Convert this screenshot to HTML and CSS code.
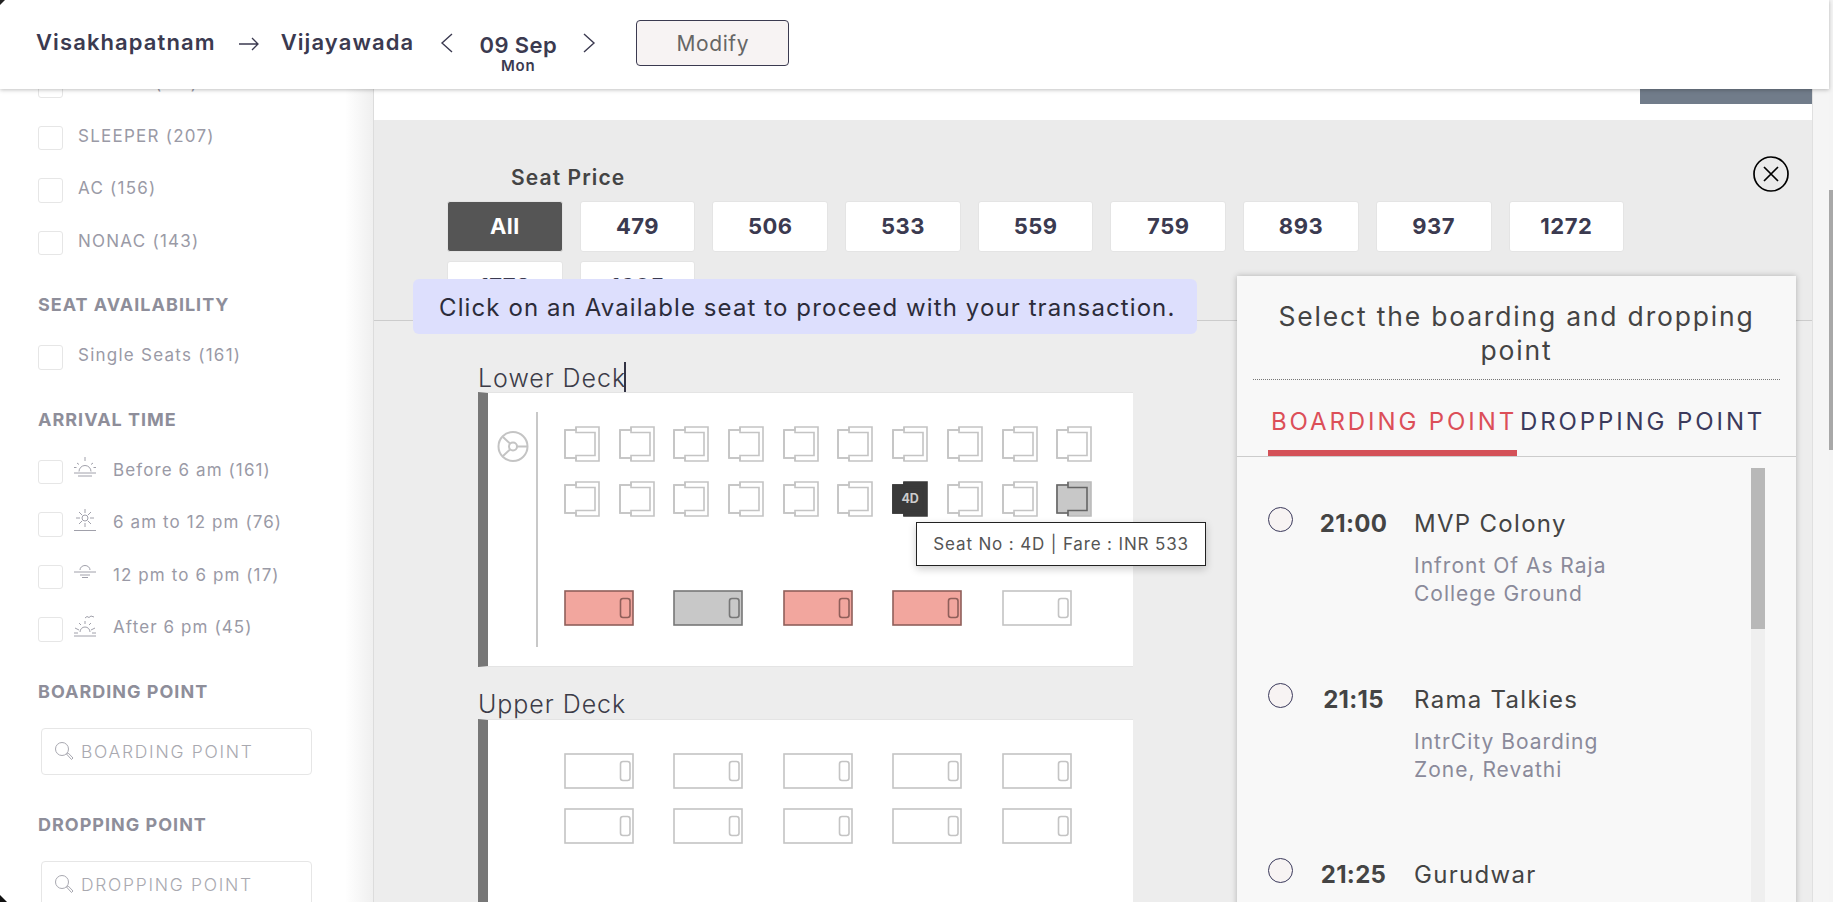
FILE: index.html
```html
<!DOCTYPE html>
<html>
<head>
<meta charset="utf-8"/>
<title>Select seats</title>
<link rel="stylesheet" href="styles.css">
</head>
<body>
<svg class="defs" width="0" height="0">
  <symbol id="seat" viewBox="0 0 36 36">
    <path d="M1 4H12V1H35V35H12V32H1Z"/>
    <path class="seat-in" d="M12 1V6.500H31V29.500H12V35M12 4H1V32H12"/>
  </symbol>
  <symbol id="berth" viewBox="0 0 70 36">
    <rect x="1" y="1" width="68" height="34"/>
    <rect class="seat-in" x="56.500" y="8.500" width="9.500" height="19" rx="2.500"/>
  </symbol>
  <symbol id="lens" viewBox="0 0 20 20">
    <circle cx="8" cy="8" r="6.500"/>
    <path d="M12.500 13L14 11.800L19 17L17.500 18.500Z"/>
  </symbol>
</svg>

<div class="wrap">
  <div class="page">
    <header class="topbar">
      <span class="city">Visakhapatnam</span>
      <svg class="arrow" width="20" height="14" viewBox="0 0 20 14"><path d="M0 7H19M13 1L19 7L13 13"/></svg>
      <span class="city">Vijayawada</span>
      <svg class="chev chev-l" width="13" height="20" viewBox="0 0 13 20"><path d="M12 1L2 10L12 19"/></svg>
      <div class="date"><b>09 Sep</b><small>Mon</small></div>
      <svg class="chev chev-r" width="13" height="20" viewBox="0 0 13 20"><path d="M1 1L11 10L1 19"/></svg>
      <button class="modify">Modify</button>
    </header>

    <div class="content">
      <aside class="filters">
        <div class="filter-list">
          <label class="check"><i></i><span>SEATER (161)</span></label>
          <label class="check"><i></i><span>SLEEPER (207)</span></label>
          <label class="check"><i></i><span>AC (156)</span></label>
          <label class="check"><i></i><span>NONAC (143)</span></label>

          <h4 class="filter-head">SEAT AVAILABILITY</h4>
          <label class="check"><i></i><span>Single Seats (161)</span></label>

          <h4 class="filter-head">ARRIVAL TIME</h4>
          <label class="check timed"><i></i>
            <svg width="22" height="23" viewBox="0 0 22 23"><path d="M11 0V4M5 14.500A6 6 0 0 1 17 14.500M0 16H22M4 19H18M3 6L5 7.500M19 6L17 7.500M0 10.500H2.500M19.500 10.500H22"/></svg>
            <span>Before 6 am (161)</span></label>
          <label class="check timed"><i></i>
            <svg width="22" height="23" viewBox="0 0 22 23"><circle cx="11" cy="9" r="3"/><path d="M11 0V4M11 14V18M2 9H6M16 9H20M5 3L8 6M17 3L14 6M5 15L8 12M17 15L14 12M0 21.500H22"/></svg>
            <span>6 am to 12 pm (76)</span></label>
          <label class="check timed"><i></i>
            <svg width="22" height="23" viewBox="0 0 22 23"><path d="M6 8A5 4.500 0 0 1 16 8M0 10H22M6 13H16M8 15.500H14"/></svg>
            <span>12 pm to 6 pm (17)</span></label>
          <label class="check timed"><i></i>
            <svg width="22" height="23" viewBox="0 0 22 23"><path d="M11 4L13 2.500L15 3.500L17 2L20 3M11 7V10M5 9L7 11M17 9L15 11M1 14L5 16M21 14L17 16M6 18A5 5 0 0 1 16 18M0 19H4M18 19H22M0 22H22"/></svg>
            <span>After 6 pm (45)</span></label>

          <h4 class="filter-head">BOARDING POINT</h4>
          <div class="search"><svg width="20" height="20"><use href="#lens"/></svg><span>BOARDING POINT</span></div>

          <h4 class="filter-head">DROPPING POINT</h4>
          <div class="search"><svg width="20" height="20"><use href="#lens"/></svg><span>DROPPING POINT</span></div>
        </div>
      </aside>

      <main class="bus">
        <div class="bus-top"><div class="bus-btn"></div></div>

        <section class="prices">
          <h3>Seat Price</h3>
          <div class="chips">
            <div class="chip active">All</div>
            <div class="chip">479</div>
            <div class="chip">506</div>
            <div class="chip">533</div>
            <div class="chip">559</div>
            <div class="chip">759</div>
            <div class="chip">893</div>
            <div class="chip">937</div>
            <div class="chip">1272</div>
            <div class="chip">1772</div>
            <div class="chip">1605</div>
          </div>
          <svg class="close" width="36" height="36" viewBox="0 0 36 36"><circle cx="18" cy="18" r="17"/><path d="M11 11L25 25M25 11L11 25"/></svg>
          <div class="notice">Click on an Available seat to proceed with your transaction.</div>
        </section>

        <section class="decks">
          <div class="deck-name">Lower Deck<em class="caret"></em></div>
          <div class="deck deck-lower">
            <svg class="wheel" width="32" height="33" viewBox="0 0 32 33"><circle cx="16" cy="16.500" r="14.500"/><circle cx="16" cy="16.500" r="4"/><path d="M6 7L13 13.500M6 26L13 19.500M20 16.500H31"/></svg>
            <div class="seats">
              <div class="seat-grid">
                <svg class="seat"><use href="#seat"/></svg>
                <svg class="seat"><use href="#seat"/></svg>
                <svg class="seat"><use href="#seat"/></svg>
                <svg class="seat"><use href="#seat"/></svg>
                <svg class="seat"><use href="#seat"/></svg>
                <svg class="seat"><use href="#seat"/></svg>
                <svg class="seat"><use href="#seat"/></svg>
                <svg class="seat"><use href="#seat"/></svg>
                <svg class="seat"><use href="#seat"/></svg>
                <svg class="seat"><use href="#seat"/></svg>
                <svg class="seat"><use href="#seat"/></svg>
                <svg class="seat"><use href="#seat"/></svg>
                <svg class="seat"><use href="#seat"/></svg>
                <svg class="seat"><use href="#seat"/></svg>
                <svg class="seat"><use href="#seat"/></svg>
                <svg class="seat"><use href="#seat"/></svg>
                <div class="seat-hover"><svg class="seat dark"><use href="#seat"/></svg><span>4D</span>
                  <div class="seat-tip">Seat No : 4D | Fare : INR 533</div>
                </div>
                <svg class="seat"><use href="#seat"/></svg>
                <svg class="seat"><use href="#seat"/></svg>
                <svg class="seat taken"><use href="#seat"/></svg>
              </div>
              <div class="berth-grid berth-single">
                <svg class="berth ladies"><use href="#berth"/></svg>
                <svg class="berth taken"><use href="#berth"/></svg>
                <svg class="berth ladies"><use href="#berth"/></svg>
                <svg class="berth ladies"><use href="#berth"/></svg>
                <svg class="berth"><use href="#berth"/></svg>
              </div>
            </div>
          </div>

          <div class="deck-name upper-name">Upper Deck</div>
          <div class="deck deck-upper">
            <div class="berth-grid">
              <svg class="berth"><use href="#berth"/></svg>
              <svg class="berth"><use href="#berth"/></svg>
              <svg class="berth"><use href="#berth"/></svg>
              <svg class="berth"><use href="#berth"/></svg>
              <svg class="berth"><use href="#berth"/></svg>
              <svg class="berth"><use href="#berth"/></svg>
              <svg class="berth"><use href="#berth"/></svg>
              <svg class="berth"><use href="#berth"/></svg>
              <svg class="berth"><use href="#berth"/></svg>
              <svg class="berth"><use href="#berth"/></svg>
            </div>
          </div>
        </section>

        <aside class="points">
          <h3>Select the boarding and dropping point</h3>
          <div class="tabs">
            <div class="tab on">BOARDING POINT</div>
            <div class="tab">DROPPING POINT</div>
          </div>
          <div class="point-list">
            <div class="point">
              <i class="radio"></i><b>21:00</b>
              <div><p class="point-name">MVP Colony</p><p class="point-addr">Infront Of As Raja<br>College Ground</p></div>
            </div>
            <div class="point">
              <i class="radio"></i><b>21:15</b>
              <div><p class="point-name">Rama Talkies</p><p class="point-addr">IntrCity Boarding<br>Zone, Revathi</p></div>
            </div>
            <div class="point">
              <i class="radio"></i><b>21:25</b>
              <div><p class="point-name">Gurudwar</p></div>
            </div>
            <div class="list-bar"><div class="list-thumb"></div></div>
          </div>
        </aside>
      </main>

      <div class="gutter"></div>
    </div>
  </div>
  <div class="page-bar"><div class="page-thumb"></div></div>
</div>
</body>
</html>
```

FILE: styles.css
```css
* {
  box-sizing: border-box;
}

html, body {
  margin: 0;
  height: 902px;
  overflow: hidden;
}

body {
  font-family: Inter, "Open Sans", sans-serif;
  background: white;
  color: #444;
}

.defs {
  position: absolute;
}

.wrap {
  position: relative;
  display: flex;
  height: 902px;
}

/* the dark window corners on the left */
.wrap::before,
.wrap::after {
  content: "";
  position: absolute;
  left: 0;
  z-index: 9;
}

.wrap::before {
  top: 0;
  width: 5px;
  height: 5px;
  background: linear-gradient(135deg, #222 45%, transparent 55%);
}

.wrap::after {
  bottom: 0;
  width: 7px;
  height: 7px;
  background: linear-gradient(45deg, #111 45%, transparent 55%);
}

.page {
  flex: 1;
  min-width: 0;
  display: flex;
  flex-direction: column;
}

.page-bar {
  width: 4px;
  background: #f4f4f4;
  padding-top: 190px;
}

.page-thumb {
  height: 260px;
  background: #a8a8a8;
}

/* top bar */
.topbar {
  position: relative;
  z-index: 5;
  flex: none;
  height: 89px;
  background: white;
  box-shadow: 0 1px 4px rgba(0, 0, 0, .25);
  display: flex;
  align-items: center;
  padding-left: 36px;
  color: #3b3a50;
}

.city {
  font-size: 22px;
  font-weight: 600;
  letter-spacing: 1.100px;
  margin-top: -5px;
}

.arrow {
  margin: -1px 22px 0 23px;
  fill: none;
  stroke: #3b3a50;
  stroke-width: 1.300;
}

.chev {
  fill: none;
  stroke: #3b3a50;
  stroke-width: 1.400;
  margin-top: -4px;
}

.chev-l {
  margin-left: 26px;
}

.date {
  width: 130px;
  text-align: center;
  padding-top: 16px;
}

.date b {
  display: block;
  font-size: 22px;
  font-weight: 600;
  line-height: 26px;
  letter-spacing: .4px;
}

.date small {
  display: block;
  font-size: 15px;
  font-weight: 600;
  line-height: 16px;
  letter-spacing: .8px;
}

.modify {
  width: 153px;
  height: 46px;
  margin: -3px 0 0 40px;
  background: #f7f3f3;
  border: 1px solid #3b3a50;
  border-radius: 4px;
  font-family: inherit;
  font-size: 21px;
  color: #666;
  letter-spacing: .6px;
}

/* layout under the bar */
.content {
  flex: 1;
  min-height: 0;
  display: flex;
}

.filters {
  flex: none;
  width: 374px;
  overflow: hidden;
  background: linear-gradient(to right, white 345px, #f0f0f0 372px);
  border-right: 1px solid #dcdcdc;
}

.filter-list {
  margin-top: -16px;
  padding-left: 38px;
}

.check {
  display: flex;
  align-items: flex-start;
  height: 24.500px;
  margin-bottom: 28px;
  font-size: 17px;
  line-height: 20px;
  color: #9a9aa6;
  letter-spacing: 1.250px;
}

.check i {
  flex: none;
  width: 25px;
  height: 24.500px;
  background: white;
  border: 1px solid #e6e6e6;
  border-radius: 3px;
  margin-right: 15px;
}

.check.timed {
  letter-spacing: 1.100px;
}

.check.timed i {
  margin-right: 11px;
}

.check svg {
  flex: none;
  margin: -3px 17px 0 0;
  fill: none;
  stroke: #a0a0aa;
  stroke-width: 1;
}

.filter-head {
  margin: 40px 0 30px;
  font-size: 18px;
  line-height: 20px;
  font-weight: 700;
  color: #8e8e9a;
  letter-spacing: 1px;
}

.search {
  display: flex;
  align-items: center;
  width: 271px;
  height: 47px;
  margin: -4px 0 0 3px;
  padding-left: 12px;
  background: white;
  border: 1px solid #e6e6e6;
  border-radius: 4px;
  font-size: 17.500px;
  font-weight: 300;
  color: #a9a9b0;
  letter-spacing: 1.700px;
  white-space: nowrap;
}

.search svg {
  flex: none;
  margin-right: 7px;
  fill: none;
  stroke: #a8a8b0;
  stroke-width: 1;
}

/* bus panel */
.bus {
  flex: 1;
  position: relative;
  min-width: 0;
  background: #ededed;
  overflow: hidden;
}

.gutter {
  flex: none;
  width: 17px;
  background: #f5f5f5;
  border-left: 1px solid #e0e0e0;
}

.bus-top {
  height: 31px;
  background: white;
  display: flex;
  justify-content: flex-end;
}

.bus-btn {
  width: 172px;
  height: 15px;
  background: #717c8a;
}

.prices {
  height: 201px;
  background: #ebebeb;
  border-bottom: 1px solid #ccc;
  padding: 46px 0 0 73px;
}

.prices h3 {
  margin: 0 0 11px 64px;
  font-size: 21px;
  line-height: 24px;
  font-weight: 600;
  letter-spacing: 1.100px;
}

.chips {
  display: flex;
  flex-wrap: wrap;
  gap: 9.500px 17px;
  width: 1190px;
}

.chip {
  width: 115.700px;
  height: 50.500px;
  background: white;
  border: 1px solid #e4e4e4;
  border-radius: 3px;
  font-size: 22px;
  font-weight: 700;
  line-height: 48px;
  text-align: center;
  color: #3b3a50;
  letter-spacing: .5px;
}

.chip.active {
  background: #555;
  color: white;
}

.close {
  position: absolute;
  left: 1379px;
  top: 67px;
  fill: none;
  stroke: #000;
  stroke-width: 1.700;
}

.notice {
  position: absolute;
  left: 39px;
  top: 190px;
  width: 784px;
  height: 55px;
  padding-left: 26px;
  background: #dddffd;
  border-radius: 6px;
  font-size: 24px;
  line-height: 57px;
  color: #2c2c3a;
  letter-spacing: 1.100px;
  white-space: nowrap;
}

.decks {
  padding-left: 104px;
}

.deck-name {
  height: 71px;
  padding-top: 42px;
  font-size: 25px;
  line-height: 30px;
  font-weight: 300;
  color: #3c3c48;
  letter-spacing: .95px;
  position: relative;
  width: 148px;
  white-space: nowrap;
}

.caret {
  position: absolute;
  right: 0;
  top: 41px;
  width: 2px;
  height: 30px;
  background: #334;
}

.upper-name {
  height: 52px;
  padding-top: 22px;
}

.deck {
  width: 655px;
  background: white;
  border-left: 10px solid #777;
  border-top: 1px solid #e4e4e4;
  border-bottom: 1px solid #e4e4e4;
}

.deck-lower {
  height: 275px;
  display: flex;
  align-items: flex-start;
  padding: 19px 0 0 9px;
}

.wheel {
  flex: none;
  margin-top: 18px;
  fill: none;
  stroke: #c4c4c4;
  stroke-width: 2;
}

.seats {
  height: 235px;
  margin-left: 7px;
  padding: 14px 0 0 26px;
  border-left: 2px solid #c8c8c8;
}

.seat-grid {
  display: grid;
  grid-template-columns: repeat(10, 36px);
  gap: 19px 18.700px;
}

.seat, .berth {
  display: block;
  fill: white;
  stroke: #c4c4c4;
  stroke-width: 1.600;
}

.seat-in {
  fill: none;
  stroke: var(--seat-in, #c4c4c4);
}

.seat {
  width: 36px;
  height: 36px;
}

.berth {
  width: 70px;
  height: 36px;
}

.seat.taken {
  fill: #c8c8c8;
  stroke: #bbb;
  --seat-in: #666;
}

.seat.dark {
  fill: #3a3a3a;
  stroke: #3a3a3a;
  --seat-in: #3a3a3a;
}

.seat-hover {
  position: relative;
  width: 36px;
  height: 36px;
}

.seat-hover span {
  position: absolute;
  inset: 0;
  font-size: 12.500px;
  font-weight: 700;
  line-height: 36px;
  text-align: center;
  color: #ccc;
}

.seat-tip {
  position: absolute;
  left: 24px;
  top: 41px;
  width: 290px;
  height: 44px;
  background: white;
  border: 1px solid #222;
  box-shadow: 0 3px 8px rgba(0, 0, 0, .2);
  font-size: 17px;
  font-weight: 400;
  line-height: 42px;
  text-align: center;
  color: #555;
  letter-spacing: .85px;
  white-space: nowrap;
  z-index: 2;
}

.berth-grid {
  display: grid;
  grid-template-columns: repeat(5, 70px);
  gap: 19px 39.400px;
}

.berth-single {
  margin-top: 73px;
}

.berth.ladies {
  fill: #f2a69e;
  stroke: #8f5f5a;
  --seat-in: #8f5f5a;
}

.berth.taken {
  fill: #c8c8c8;
  stroke: #777;
  --seat-in: #777;
}

.deck-upper {
  height: 300px;
  padding: 33px 0 0 76px;
}

/* boarding and dropping panel */
.points {
  position: absolute;
  left: 863px;
  top: 187px;
  width: 559px;
  height: 700px;
  background: #f8f8f8;
  box-shadow: 0 0 6px rgba(0, 0, 0, .25);
}

.points h3 {
  margin: 0 16px;
  padding: 23px 0 12px;
  border-bottom: 1px dotted #777;
  font-size: 26.500px;
  line-height: 34px;
  font-weight: 400;
  text-align: center;
  color: #444;
  letter-spacing: 1.800px;
}

.tabs {
  display: flex;
  height: 77px;
  padding: 26px 0 0 31px;
  border-bottom: 1px solid #ccc;
}

.tab {
  height: 50px;
  padding: 1px 0 0 3px;
  font-size: 24px;
  line-height: 30px;
  letter-spacing: 2.900px;
  color: #3b3a5c;
  white-space: nowrap;
}

.tab.on {
  flex: none;
  width: 249px;
  color: #dc4f58;
  border-bottom: 6px solid #d45158;
}

.point-list {
  position: relative;
  padding: 50px 0 0 31px;
  height: 500px;
}

.point {
  display: flex;
  align-items: flex-start;
  height: 175.500px;
}

.radio {
  flex: none;
  width: 25px;
  height: 25px;
  background: #f7f3f3;
  border: 1px solid #3b3a5c;
  border-radius: 50%;
}

.point b {
  flex: none;
  width: 121px;
  padding-top: 2px;
  text-align: center;
  font-size: 24px;
  line-height: 30px;
  font-weight: 700;
  letter-spacing: .3px;
  color: #444;
}

.point p {
  margin: 0;
}

.point-name {
  padding-top: 2px;
  font-size: 24px;
  line-height: 30px;
  letter-spacing: 1.300px;
  color: #444;
}

.point-addr {
  padding-top: 13px;
  font-size: 21px;
  line-height: 28px;
  letter-spacing: 1px;
  color: #8a8a9a;
}

.list-bar {
  position: absolute;
  left: 514px;
  top: 11px;
  width: 14px;
  height: 489px;
  background: #efefef;
}

.list-thumb {
  height: 161px;
  background: #b8b8b8;
}
```
